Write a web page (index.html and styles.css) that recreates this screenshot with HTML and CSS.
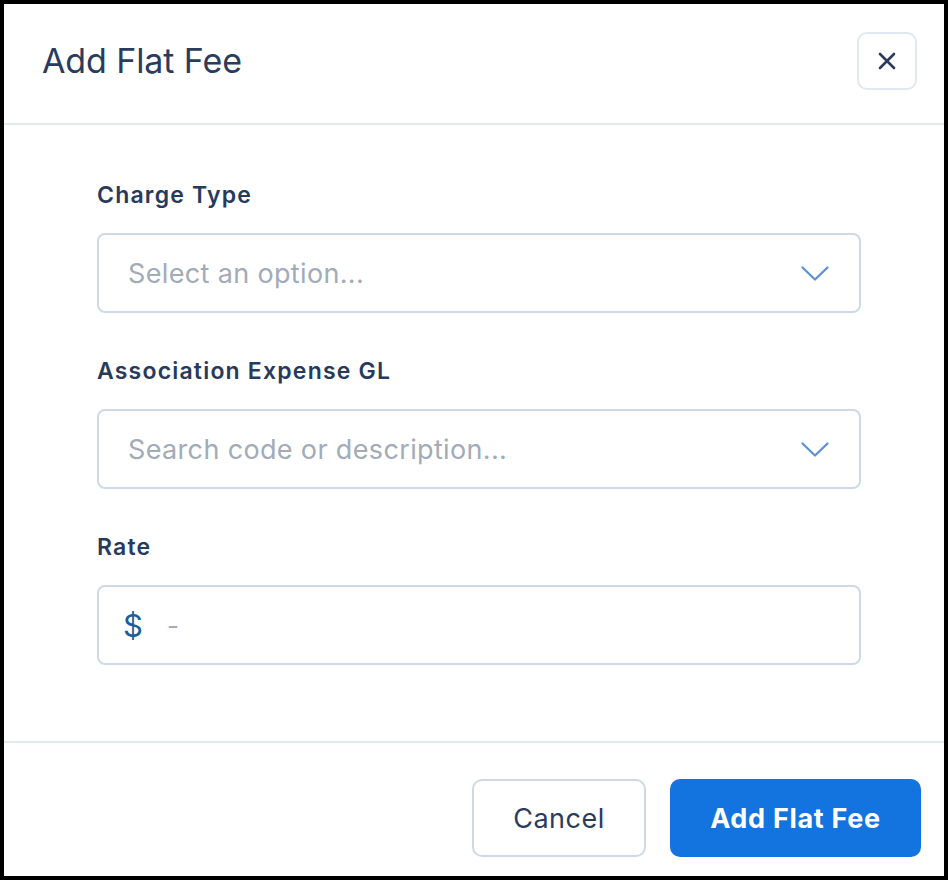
FILE: index.html
```html
<!DOCTYPE html>
<html lang="en">
<head>
<meta charset="utf-8">
<title>Add Flat Fee</title>
<link rel="stylesheet" href="styles.css">
</head>
<body>
<div class="modal">
  <header class="modal-header">
    <h1 class="modal-title">Add Flat Fee</h1>
    <button class="close-btn" type="button" aria-label="Close">
      <svg width="18" height="18" viewBox="0 0 18 18" fill="none" stroke="#2a3b5e" stroke-width="2.6" stroke-linecap="round"><path d="M2 2L16 16M16 2L2 16"/></svg>
    </button>
  </header>
  <div class="modal-body">
    <div class="field">
      <label class="field-label">Charge Type</label>
      <div class="input">
        <span class="placeholder">Select an option...</span>
        <svg class="chevron" width="28" height="15" viewBox="0 0 28 15" fill="none" stroke="#5b8fd8" stroke-width="2.2" stroke-linecap="round" stroke-linejoin="round"><path d="M1.5 1.5L14 13.5L26.5 1.5"/></svg>
      </div>
    </div>
    <div class="field">
      <label class="field-label">Association Expense GL</label>
      <div class="input">
        <span class="placeholder">Search code or description...</span>
        <svg class="chevron" width="28" height="15" viewBox="0 0 28 15" fill="none" stroke="#5b8fd8" stroke-width="2.2" stroke-linecap="round" stroke-linejoin="round"><path d="M1.5 1.5L14 13.5L26.5 1.5"/></svg>
      </div>
    </div>
    <div class="field">
      <label class="field-label">Rate</label>
      <div class="input">
        <span class="currency">$</span>
        <span class="placeholder dash">-</span>
      </div>
    </div>
  </div>
  <footer class="modal-footer">
    <button class="btn btn-secondary" type="button">Cancel</button>
    <button class="btn btn-primary" type="button">Add Flat Fee</button>
  </footer>
</div>
</body>
</html>
```

FILE: styles.css
```css
* { box-sizing: border-box; }
html, body { margin: 0; padding: 0; }
body {
  background: #000;
  font-family: "Inter", "Liberation Sans", sans-serif;
  width: 948px;
  height: 880px;
  padding: 4px;
}
.modal {
  background: #fff;
  width: 940px;
  height: 872px;
  display: flex;
  flex-direction: column;
}
.modal-header {
  height: 121px;
  flex: none;
  display: flex;
  align-items: center;
  justify-content: space-between;
  padding: 0 27px 5px 38px;
  border-bottom: 2px solid #e2eaf1;
}
.modal-title {
  margin: 0;
  font-size: 34px;
  line-height: 40px;
  font-weight: 400;
  color: #2a3b5e;
  letter-spacing: -0.1px;
}
.close-btn {
  width: 60px;
  height: 58px;
  border: 2px solid #e0e9f1;
  border-radius: 10px;
  background: #fff;
  display: flex;
  align-items: center;
  justify-content: center;
  padding: 0;
}
.modal-body {
  flex: 1;
  padding: 56px 0 0 93px;
  display: flex;
  flex-direction: column;
  gap: 44px;
}
.field { width: 764px; }
.field-label {
  display: block;
  font-size: 23px;
  line-height: 28px;
  font-weight: 600;
  color: #273a5c;
  letter-spacing: 1.2px;
  margin-bottom: 24px;
}
.input {
  height: 80px;
  border: 2px solid #cfdae6;
  border-radius: 8px;
  display: flex;
  align-items: center;
  padding: 0 30px 0 29px;
}
.placeholder {
  flex: 1;
  font-size: 27px;
  letter-spacing: 0.35px;
  color: #a2abb8;
}
.chevron { flex: none; }
.currency {
  font-size: 31px;
  color: #1b5e98;
  margin-left: -5px;
  margin-right: 24px;
  font-weight: 400;
}
.dash { font-size: 26px; }
.modal-footer {
  flex: none;
  height: 135px;
  border-top: 2px solid #e2eaf1;
  display: flex;
  justify-content: flex-end;
  align-items: flex-start;
  gap: 24px;
  padding: 36px 23px 0 0;
}
.btn {
  height: 78px;
  border-radius: 10px;
  font-family: "Inter", "Liberation Sans", sans-serif;
  font-size: 27px;
  padding: 0;
}
.btn-secondary {
  width: 174px;
  background: #fff;
  border: 2px solid #cfd9e5;
  color: #2a3b5e;
  font-weight: 400;
  letter-spacing: 0.5px;
}
.btn-primary {
  width: 251px;
  background: #1374e0;
  border: none;
  color: #fff;
  font-weight: 700;
  letter-spacing: 0.7px;
}
```
